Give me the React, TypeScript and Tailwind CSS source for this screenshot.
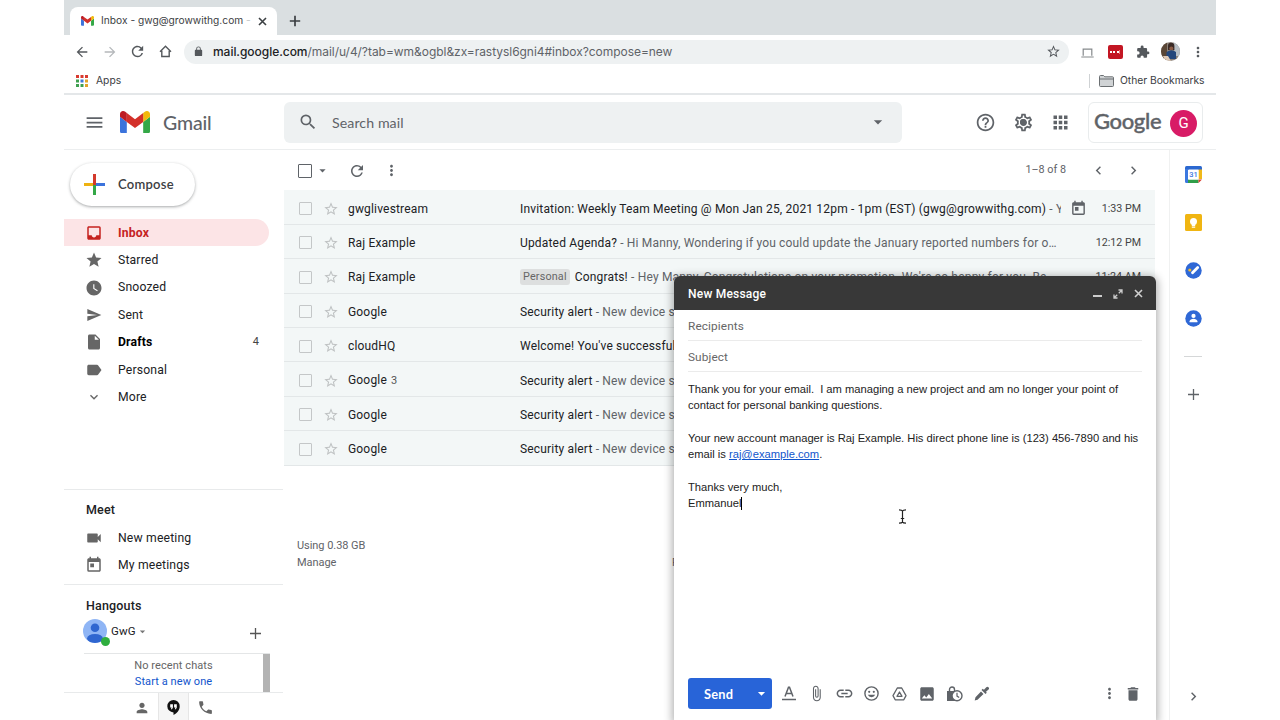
import type { ReactNode } from "react";
import {
  MdApps,
  MdArrowBack,
  MdArrowDropDown,
  MdArrowForward,
  MdAttachFile,
  MdChevronLeft,
  MdChevronRight,
  MdDelete,
  MdExpandMore,
  MdHelpOutline,
  MdImage,
  MdInbox,
  MdLink,
  MdMenu,
  MdMoreVert,
  MdOutlineSettings,
  MdPerson,
  MdPhone,
  MdRefresh,
  MdSearch,
  MdSend,
  MdStar,
  MdStarBorder,
  MdToday,
  MdWatchLater,
} from "react-icons/md";

const solid = {
  label:
    "M17.63 5.84C17.27 5.33 16.67 5 16 5L5 5.01C3.9 5.01 3 5.9 3 7v10c0 1.1.9 1.99 2 1.99L16 19c.67 0 1.27-.33 1.63-.84L22 12z",
  video:
    "M17 10.500V7c0-.55-.45-1-1-1H4c-.55 0-1 .45-1 1v10c0 .55.45 1 1 1h12c.55 0 1-.45 1-1v-3.500l4 4v-11z",
  file: "M6 2c-1.100 0-1.990.9-1.990 2L4 20c0 1.100.89 2 1.990 2H18c1.100 0 2-.9 2-2V8l-6-6zm7 7V3.500L18.500 9z",
  puzzle:
    "M20.500 11H19V7c0-1.100-.9-2-2-2h-4V3.500a2.500 2.500 0 0 0-5 0V5H4c-1.100 0-1.990.9-1.990 2v3.800H3.500a2.700 2.700 0 0 1 0 5.400H2V20c0 1.100.9 2 2 2h3.800v-1.500a2.700 2.700 0 0 1 5.400 0V22H17c1.100 0 2-.9 2-2v-4h1.500a2.500 2.500 0 0 0 0-5z",
  lock: "M18 8h-1V6A5 5 0 0 0 7 6v2H6c-1.100 0-2 .9-2 2v10c0 1.100.9 2 2 2h12c1.100 0 2-.9 2-2V10c0-1.100-.9-2-2-2zM8.900 8V6a3.100 3.100 0 0 1 6.200 0v2z",
};

function Solid({ d, size }: { d: string; size: number }) {
  return (
    <svg width={size} height={size} viewBox="0 0 24 24" fill="currentColor" fillRule="evenodd">
      <path d={d} />
    </svg>
  );
}

function CloseIcon({ className }: { className: string }) {
  return (
    <svg className={className} width="9" height="9" viewBox="0 0 9 9" stroke="currentColor" strokeWidth="1.600">
      <path d="m1 1 7 7M8 1 1 8" />
    </svg>
  );
}

const navItems = [
  { label: "Inbox", icon: <MdInbox size={18} />, active: true },
  { label: "Starred", icon: <MdStar size={18} /> },
  { label: "Snoozed", icon: <MdWatchLater size={18} /> },
  { label: "Sent", icon: <MdSend size={16} /> },
  { label: "Drafts", icon: <Solid d={solid.file} size={18} />, bold: true, count: 4 },
  { label: "Personal", icon: <Solid d={solid.label} size={18} /> },
  { label: "More", icon: <MdExpandMore size={16} /> },
];

const mails = [
  {
    from: "gwglivestream",
    subject: "Invitation: Weekly Team Meeting @ Mon Jan 25, 2021 12pm - 1pm (EST) (gwg@growwithg.com)",
    snippet: "You",
    time: "1:33 PM",
    event: true,
  },
  {
    from: "Raj Example",
    subject: "Updated Agenda?",
    snippet: "Hi Manny, Wondering if you could update the January reported numbers for o…",
    time: "12:12 PM",
  },
  {
    from: "Raj Example",
    tag: "Personal",
    subject: "Congrats!",
    snippet: "Hey Manny, Congratulations on your promotion. We're so happy for you. Be…",
    time: "11:24 AM",
  },
  { from: "Google", subject: "Security alert", snippet: "New device s" },
  { from: "cloudHQ", subject: "Welcome! You've successful" },
  { from: "Google", thread: 3, subject: "Security alert", snippet: "New device s" },
  { from: "Google", subject: "Security alert", snippet: "New device s" },
  { from: "Google", subject: "Security alert", snippet: "New device s" },
];

function Slot({ className, children }: { className: string; children: ReactNode }) {
  return <span className={`flex shrink-0 items-center justify-center ${className}`}>{children}</span>;
}

function GmailLogo({ width }: { width: number }) {
  return (
    <svg width={width} height={width * 0.75} viewBox="52 42 88 66">
      <path fill="#3b73dc" d="M58 108h14V74L52 59v43c0 3.32 2.69 6 6 6" />
      <path fill="#34a847" d="M120 108h14c3.32 0 6-2.69 6-6V59l-20 15" />
      <path fill="#f2b90c" d="M120 48v26l20-15v-8c0-7.42-8.47-11.65-14.4-7.2" />
      <path fill="#d3302a" d="M72 74V48l24 18 24-18v26L96 92" />
      <path fill="#bd1c24" d="M52 51v8l20 15V48l-5.6-4.2c-5.94-4.45-14.4-.22-14.4 7.2" />
    </svg>
  );
}

function BrowserChrome() {
  return (
    <div className="shrink-0 font-[Inter,sans-serif] text-[#3c4043]">
      <div className="flex h-[35px] items-end bg-[#dadfe1] pl-1.5">
        <div className="flex h-7 w-[207px] items-center rounded-t-lg bg-white pl-[11px]">
          <GmailLogo width={13} />
          <span className="ml-[7px] w-[150px] text-[10.2px] tracking-[0.02px] whitespace-nowrap">
            Inbox - gwg@growwithg.com <span className="text-[#c3c6c8]">-</span>
          </span>
          <CloseIcon className="ml-[7px]" />
        </div>
        <svg className="mb-[8px] ml-3" width="12" height="12" viewBox="0 0 12 12" stroke="#3c4043" strokeWidth="1.7">
          <path d="M6 .8v10.4M.8 6h10.4" />
        </svg>
      </div>
      <div className="flex h-[33px] items-center text-[#54585c]">
        <Slot className="ml-1 w-7">
          <MdArrowBack size={16} />
        </Slot>
        <Slot className="w-7 text-[#b5b8bb]">
          <MdArrowForward size={16} />
        </Slot>
        <Slot className="w-[27px]">
          <MdRefresh size={17} />
        </Slot>
        <Slot className="w-7">
          <svg width="13" height="13" viewBox="0 0 13 13" fill="none" stroke="currentColor" strokeWidth="1.4">
            <path d="M1 6.8 6.5 1.3 12 6.8M2.8 5.8v5.7h7.4V5.8" />
          </svg>
        </Slot>
        <div className="ml-[5px] flex h-6 w-[885px] items-center rounded-full bg-[#eef1f2] pr-[8px] pl-[9px]">
          <Solid d={solid.lock} size={11} />
          <span className="ml-[9px] flex-1 text-[12px] tracking-[-0.04px] whitespace-nowrap text-[#5f6368]">
            <span className="font-medium text-[#202124]">mail.google.com</span>
            /mail/u/4/?tab=wm&amp;ogbl&amp;zx=rastysl6gni4#inbox?compose=new
          </span>
          <MdStarBorder size={15} />
        </div>
        <Slot className="ml-1 w-[28px] pt-0.5">
          <svg width="13" height="10" viewBox="0 0 13 10" fill="none" stroke="#85898c" strokeWidth="1.2">
            <path d="M2.2 7.8V1.2h8.6v6.6M.3 9h12.4" />
          </svg>
        </Slot>
        <Slot className="w-[28px]">
          <span className="flex h-3.5 w-[15px] items-center justify-center gap-[1.5px] rounded-[2px] bg-[#c31623]">
            <i className="size-0.5 bg-white" />
            <i className="size-0.5 bg-white" />
            <i className="size-0.5 bg-white" />
            <i className="-ml-px h-1 w-px bg-[#e77]" />
          </span>
        </Slot>
        <Slot className="w-[27px]">
          <Solid d={solid.puzzle} size={14} />
        </Slot>
        <Slot className="w-[28px]">
          <svg width="19" height="19" viewBox="0 0 19 19">
            <clipPath id="photo">
              <circle cx="9.5" cy="9.5" r="9.5" />
            </clipPath>
            <g clipPath="url(#photo)">
              <path fill="#8c827a" d="M0 0h19v19H0z" />
              <path fill="#b9c0c6" d="M12 0h7v14h-5z" />
              <path fill="#5a4636" d="M0 0h6v19H0z" />
              <path fill="#3a2a26" d="M7 4a3.200 3.200 0 0 1 6.400 0v4H7z" />
              <circle cx="10.300" cy="6.500" r="2" fill="#8b5b45" />
              <path fill="#24477c" d="M5.500 10q5-3.500 9.500 0v7H5.500z" />
              <path fill="#dfc9b6" d="M2 14h5l3 5H4z" />
            </g>
          </svg>
        </Slot>
        <Slot className="w-[28px]">
          <MdMoreVert size={16} />
        </Slot>
      </div>
      <div className="flex h-[27px] items-center border-b-2 border-[#e4e7e9] pr-3 pl-[12px] text-[10.3px]">
        <svg width="12" height="12" viewBox="0 0 12 12">
          <path fill="#d93a2f" d="M0 0h3v3H0zM4.500 0h3v3h-3zM9 0h3v3H9z" />
          <path fill="#3fa050" d="M0 4.500h3v3H0zM0 9h3v3H0z" />
          <path fill="#3f78d8" d="M4.500 4.500h3v3h-3z" />
          <path fill="#e2a32a" d="M9 4.500h3v3H9zM9 9h3v3H9z" />
          <path fill="#3fa050" d="M4.500 9h3v3h-3z" />
        </svg>
        <span className="ml-[8px] flex-1">Apps</span>
        <span className="h-3.5 w-px bg-[#cfd2d4]" />
        <svg className="mr-[6px] ml-[9px]" width="15" height="12" viewBox="0 0 15 12">
          <path fill="#d0d3d5" stroke="#6b6f72" d="M.5 10.500v-9q0-1 1-1h3l1.300 1.300h7.700q1 0 1 1v7.700q0 1-1 1h-12q-1 0-1-1zM.5 4h14" />
        </svg>
        <span className="w-[84px] tracking-[-0.02px] whitespace-nowrap">Other Bookmarks</span>
      </div>
    </div>
  );
}

function Header() {
  return (
    <header className="flex h-[55px] shrink-0 items-center border-b border-[#eceeef] text-[#5f6368]">
      <Slot className="ml-[18px] w-6">
        <MdMenu size={21} />
      </Slot>
      <span className="ml-[14px]">
        <GmailLogo width={30} />
      </span>
      <span className="mt-px ml-[13px] w-[121px] font-[Lato,sans-serif] text-[19.5px] font-medium tracking-[-0.15px]">
        Gmail
      </span>
      <div className="flex h-[41px] w-[618px] items-center rounded-md bg-[#eef1f2] px-[14px]">
        <MdSearch size={20} />
        <span className="mt-px ml-[14px] flex-1 font-[Lato,sans-serif] text-[14.2px] tracking-[0.07px]">
          Search mail
        </span>
        <MdArrowDropDown size={20} />
      </div>
      <Slot className="ml-[64px] w-[38px]">
        <MdHelpOutline size={21} />
      </Slot>
      <Slot className="relative w-[38px]">
        <MdOutlineSettings size={21} />
        <i className="absolute size-1.5 rounded-full bg-[#5f6368]" />
      </Slot>
      <Slot className="w-[37px]">
        <MdApps size={21} />
      </Slot>
      <div className="ml-[9px] flex h-[41px] w-[115px] items-center rounded-md border-[1.5px] border-[#e9eced] pl-[5px]">
        <span className="w-[76px] pb-[3px] font-[Lato,sans-serif] text-[22px] font-medium tracking-[-0.35px] [-webkit-text-stroke:0.4px_#5f6368]">
          Google
        </span>
        <span className="mt-0.5 flex size-[27px] items-center justify-center rounded-full bg-[#d81b66] text-[15px] text-white">
          G
        </span>
      </div>
    </header>
  );
}

function SideItem({ icon, children }: { icon: ReactNode; children: ReactNode }) {
  return (
    <>
      <Slot className="ml-[21px] w-[18px]">{icon}</Slot>
      <span className="ml-[15px] flex-1">{children}</span>
    </>
  );
}

function Sidebar() {
  return (
    <aside className="flex w-[219px] shrink-0 flex-col text-[12.2px] tracking-[0.17px] text-[#202124]">
      <button className="mt-[13px] ml-1.5 flex h-[43px] w-[125px] shrink-0 items-center rounded-full pl-[14px] font-[Lato,sans-serif] text-[13px] font-semibold tracking-[0.25px] text-[#3c4043] shadow-[0_1px_3px_rgba(60,64,67,0.45)]">
        <svg width="21" height="21" viewBox="0 0 21 21">
          <path fill="#eeb211" d="M0 9h9v3H0z" />
          <path fill="#3b73dc" d="M12 9h9v3h-9z" />
          <path fill="#34a847" d="M9 11h3v10H9z" />
          <path fill="#d33a2c" d="M9 0h3v11H9z" />
        </svg>
        <span className="ml-[13px]">Compose</span>
      </button>
      <nav className="mt-[13px] flex flex-col">
        {navItems.map((item) => (
          <div
            key={item.label}
            className={`flex h-[27.45px] w-[205px] items-center rounded-r-full ${item.active ? "bg-[#fce4e6] text-[#c5221f]" : "text-[#666]"}`}
          >
            <SideItem icon={item.icon}>
              <span
                className={
                  item.active ? "font-bold text-[#c5221f]" : item.bold ? "font-bold text-black" : "text-[#202124]"
                }
              >
                {item.label}
              </span>
            </SideItem>
            {item.count && <span className="mr-2.5 text-[11px] text-[#444]">{item.count}</span>}
          </div>
        ))}
      </nav>
      <div className="mt-[78px] border-t border-[#e8eaeb] pt-[10px]">
        <h3 className="pl-[22px] text-[12.500px] leading-5 font-medium">Meet</h3>
        <div className="mt-[4px] flex h-[27.500px] items-center text-[#666]">
          <SideItem icon={<Solid d={solid.video} size={18} />}>
            <span className="text-[#202124]">New meeting</span>
          </SideItem>
        </div>
        <div className="flex h-[27.500px] items-center text-[#666]">
          <SideItem icon={<MdToday size={18} />}>
            <span className="text-[#202124]">My meetings</span>
          </SideItem>
        </div>
      </div>
      <div className="mt-[5px] flex flex-1 flex-col border-t border-[#e8eaeb] pt-[11px]">
        <h3 className="pl-[22px] text-[12.500px] leading-5 font-medium">Hangouts</h3>
        <div className="flex h-[37px] items-start pl-[19px]">
          <span className="relative mt-[3px]">
            <svg width="24" height="24" viewBox="0 0 24 24">
              <clipPath id="face">
                <circle cx="12" cy="12" r="12" />
              </clipPath>
              <circle cx="12" cy="12" r="12" fill="#8fb5f5" />
              <circle cx="12" cy="8.800" r="4.300" fill="#2f66d0" />
              <ellipse cx="12" cy="19.500" rx="8" ry="4.500" fill="#2f66d0" clipPath="url(#face)" />
            </svg>
            <i className="absolute -right-[2.500px] -bottom-[3px] size-[9px] rounded-full bg-[#2fae3f]" />
          </span>
          <span className="mt-[7px] ml-[4px] text-[11.500px] leading-4">GwG</span>
          <MdArrowDropDown size={13} className="mt-[9px] text-[#777]" />
          <svg className="mt-[12px] ml-[101px]" width="11" height="11" viewBox="0 0 11 11" stroke="#555" strokeWidth="1.300">
            <path d="M5.500 0v11M0 5.500h11" />
          </svg>
        </div>
        <div className="ml-5 flex h-[39px] w-[186px] justify-between border-t border-[#e4e6e7]">
          <div className="flex-1 pt-[4px] text-center text-[11px] leading-4 tracking-[0.08px] text-[#666]">
            <p>No recent chats</p>
            <p className="text-[#1155cc]">Start a new one</p>
          </div>
          <span className="w-[7px] bg-[#b3b3b3]" />
        </div>
        <div className="flex flex-1 border-t border-[#e8eaeb] pl-[62px] text-[#666]">
          <Slot className="w-8 pt-0.5">
            <MdPerson size={16} />
          </Slot>
          <Slot className="w-[31px] border-x border-[#e6e6e6] bg-[#f6f6f6] pt-0.5">
            <svg width="13" height="15" viewBox="0 0 13 15">
              <path fill="#111" d="M6.500 0a6.200 6.200 0 0 0 0 12.400V15c3.500-1.700 6.200-4.800 6.200-8.800A6.200 6.200 0 0 0 6.500 0z" />
              <path fill="#fff" d="M3.200 4.200h2.700v3.300L5 9.300H3.900l.7-1.900H3.200zM7.100 4.200h2.700v3.300l-.9 1.800H7.800l.7-1.900H7.100z" />
            </svg>
          </Slot>
          <Slot className="w-[33px] pt-0.5">
            <MdPhone size={17} />
          </Slot>
        </div>
      </div>
    </aside>
  );
}

function MailList() {
  return (
    <div className="h-[276px] overflow-hidden pt-[0.4px] text-[12px] tracking-[0.175px] text-[#202124]">
      {mails.map((mail, i) => (
        <div
          key={i}
          className="flex h-[34.400px] items-center border-b border-[#e3e7e8] bg-[#f3f7f7] pt-[3px] pr-3.5 pl-[15px] whitespace-nowrap"
        >
          <span className="size-[13px] rounded-[1px] border-[1.500px] border-[#c4c7c8]" />
          <MdStarBorder size={16} className="ml-[11px] text-[#bfc2c3]" />
          <span className="ml-[9px] w-[172px]">
            {mail.from}
            {mail.thread && <span className="ml-1 text-[11px] text-[#555]">{mail.thread}</span>}
          </span>
          {mail.tag && (
            <span className="mr-[5px] rounded-[3px] bg-[#dddfdf] px-[3px] text-[10.800px] leading-4 text-[#666]">
              {mail.tag}
            </span>
          )}
          <span className={mail.event ? "w-[541px] overflow-hidden" : ""}>
            {mail.subject}
            {mail.snippet && <span className="text-[#5f6368]"> - {mail.snippet}</span>}
          </span>
          {mail.event && <MdToday size={17} className="ml-[9px] text-[#5f6368]" />}
          {mail.time && <span className="ml-auto text-[10.700px] tracking-normal text-[#444]">{mail.time}</span>}
        </div>
      ))}
    </div>
  );
}

function SidePanel() {
  return (
    <aside className="flex w-[47px] shrink-0 flex-col items-center border-l border-[#f0f1f1] pt-4 text-[#5f6368]">
      <svg width="17" height="17" viewBox="0 0 17 17">
        <path fill="#2b68d0" d="M1.500 0h14Q17 0 17 1.500V4H0V1.500Q0 0 1.500 0z" />
        <path fill="#3b78e0" d="M0 3h3v14H1.500Q0 17 0 15.500z" />
        <path fill="#f0b91a" d="M13.500 3.500H17V13h-3.500z" />
        <path fill="#2f9e49" d="M3 13.500h10.500V17H3z" />
        <path fill="#d93a2c" d="M13.500 13.500H17L13.500 17z" />
        <path fill="#fff" d="M3.500 3.500h10v10h-10z" />
        <text x="8.500" y="11.200" textAnchor="middle" fontSize="7.500" fontWeight="500" fill="#3b78e0" fontFamily="Roboto">
          31
        </text>
      </svg>
      <svg className="mt-[31px]" width="17" height="17" viewBox="0 0 17 17">
        <rect width="17" height="17" rx="1.500" fill="#f0b512" />
        <circle cx="8.500" cy="7.500" r="3.500" fill="#fff" />
        <path fill="#fff" d="M6.800 9h3.400v3.200H6.800zM6.800 12.800h3.400v1H6.800z" />
      </svg>
      <svg className="mt-[31px]" width="17" height="17" viewBox="0 0 17 17">
        <circle cx="8.500" cy="8.500" r="8.200" fill="#2f68d6" />
        <path stroke="#fff" strokeWidth="2.800" strokeLinecap="round" d="m7.500 10.800 5.200-5.300" />
        <circle cx="4.800" cy="8" r="1.600" fill="#efb72a" />
      </svg>
      <svg className="mt-[31px]" width="17" height="17" viewBox="0 0 17 17">
        <circle cx="8.500" cy="8.500" r="8.200" fill="#2f68d6" />
        <circle cx="8.500" cy="5.900" r="2.100" fill="#fff" />
        <path fill="#fff" d="M4.600 12.200v-.9c0-1.800 2.200-2.600 3.900-2.600s3.900.8 3.900 2.600v.9z" />
      </svg>
      <span className="mt-[29px] h-px w-[18px] bg-[#d5d7d8]" />
      <svg className="mt-8" width="11" height="11" viewBox="0 0 11 11" stroke="currentColor" strokeWidth="1.300">
        <path d="M5.500 0v11M0 5.500h11" />
      </svg>
      <MdChevronRight size={17} className="mt-auto mb-[15px]" />
    </aside>
  );
}

function ComposeWindow() {
  return (
    <section className="absolute top-[276px] left-[674px] flex h-[444px] w-[482px] flex-col overflow-hidden rounded-t-md bg-white">
      <div className="flex h-[34px] shrink-0 items-center bg-[#383838] pt-px pr-[13px] pl-3.5 text-[12px] font-medium tracking-[0.22px] text-white">
        <span className="flex-1">New Message</span>
        <span className="mt-[5px] h-0.5 w-[9px] bg-[#ccc]" />
        <svg className="ml-[11px]" width="10" height="10" viewBox="0 0 10 10" fill="none" stroke="#ccc" strokeWidth="1.300">
          <path d="M5.500 1h3.500v3.500M4.500 9H1V5.500M9 1 5.800 4.200M1 9l3.200-3.200" />
        </svg>
        <CloseIcon className="ml-[11px] text-[#d0d0d0]" />
      </div>
      <div className="flex flex-1 flex-col px-3.5 text-[11.800px] tracking-[0.12px] text-[#666]">
        <div className="flex h-[31px] items-center border-b border-[#ebebeb] pt-[3px]">Recipients</div>
        <div className="flex h-[31px] items-center border-b border-[#ebebeb] pt-[3px]">Subject</div>
        <div className="mt-[9px] font-['Liberation_Sans',Arial,sans-serif] text-[11.200px] leading-[16.300px] tracking-[-0.01px] whitespace-pre text-[#222]">
          <p>Thank you for your email.  I am managing a new project and am no longer your point of</p>
          <p>contact for personal banking questions.</p>
          <br />
          <p>Your new account manager is Raj Example. His direct phone line is (123) 456-7890 and his</p>
          <p>
            email is <a className="text-[#1155cc] underline">raj@example.com</a>.
          </p>
          <br />
          <p>Thanks very much,</p>
          <p className="flex items-center">
            Emmanuel
            <span className="h-[13px] w-px bg-black" />
          </p>
        </div>
      </div>
      <div className="mb-[11px] flex h-[31px] items-center px-3.5 text-[#5f6368]">
        <div className="mr-[4px] flex h-full w-[83.500px] items-center rounded-[3px] bg-[#2864d8] pl-4 text-white">
          <span className="mt-0.5 flex-1 font-[Lato,sans-serif] text-[12.800px] font-bold tracking-[0.25px]">Send</span>
          <MdArrowDropDown size={17} className="mr-0.5" />
        </div>
        <Slot className="w-[27.500px]">
          <svg width="14" height="15" viewBox="0 0 14 15" fill="none" stroke="currentColor" strokeWidth="1.500">
            <path d="M3 10.500 6.500 1.200h1L11 10.500M4.200 7.500h5.600M0 13.500h14" />
          </svg>
        </Slot>
        <Slot className="w-[27.500px]">
          <MdAttachFile size={17} />
        </Slot>
        <Slot className="w-[27.500px]">
          <MdLink size={19} />
        </Slot>
        <Slot className="w-[27.500px]">
          <svg width="15" height="15" viewBox="0 0 15 15">
            <circle cx="7.500" cy="7.500" r="6.600" fill="none" stroke="currentColor" strokeWidth="1.400" />
            <circle cx="5.200" cy="5.800" r="1.100" fill="currentColor" />
            <circle cx="9.800" cy="5.800" r="1.100" fill="currentColor" />
            <path fill="currentColor" d="M3.800 8.800h7.400a4 4 0 0 1-7.400 0z" />
          </svg>
        </Slot>
        <Slot className="w-[27.500px]">
          <svg width="15" height="14" viewBox="0 0 15 14" fill="none" stroke="currentColor" strokeWidth="1.300" strokeLinejoin="round">
            <path d="M5.300 1h4.400l4.300 7.600-2.200 4.200H3.200L1 8.600z" />
            <path d="M7.500 5 10 9.300H5z" />
          </svg>
        </Slot>
        <Slot className="w-[27.500px]">
          <MdImage size={18} />
        </Slot>
        <Slot className="w-[27.500px]">
          <svg width="17" height="16" viewBox="0 0 17 16">
            <path fill="none" stroke="currentColor" strokeWidth="1.400" d="M3.500 6V3.500a2.500 2.500 0 0 1 5 0V6" />
            <path fill="currentColor" d="M1 5h10v10H1z" />
            <circle cx="11" cy="9.800" r="5" fill="#fff" stroke="currentColor" strokeWidth="1.400" />
            <path fill="none" stroke="currentColor" strokeWidth="1.200" d="M11 6.800v3.300l2.200 1.500" />
          </svg>
        </Slot>
        <Slot className="w-[27.500px]">
          <svg width="15" height="15" viewBox="0 0 15 15" fill="currentColor">
            <path d="m7 5.500 2.500 2.500-6 5.700-2.800.8.800-3.200zM8.800 2.800l4 4-1.300 1.300-4-4z" />
            <path d="m9.500 4.200 2.800-3a1.500 1.500 0 0 1 2.200 2.200l-3 2.800z" />
          </svg>
        </Slot>
        <MdMoreVert size={17} className="ml-auto" />
        <MdDelete size={18} className="ml-[6px]" />
      </div>
    </section>
  );
}

export default function App() {
  return (
    <div className="relative flex h-[720px] w-[1280px] flex-col overflow-hidden bg-white px-16 font-[Roboto,sans-serif]">
      <BrowserChrome />
      <Header />
      <div className="flex min-h-0 flex-1">
        <Sidebar />
        <main className="flex w-[886px] shrink-0 flex-col pr-3.5 pl-px text-[#5f6368]">
          <div className="flex h-10 shrink-0 items-center pt-px pl-3.5">
            <span className="size-[14px] rounded-[1px] border-[1.500px] border-[#5f6368]" />
            <MdArrowDropDown size={15} className="ml-[3px]" />
            <MdRefresh size={18} className="ml-[18px]" />
            <MdMoreVert size={17} className="ml-[17px]" />
            <span className="ml-auto text-[10.800px]">1–8 of 8</span>
            <MdChevronLeft size={17} className="ml-6" />
            <MdChevronRight size={17} className="mr-[13px] ml-[18px]" />
          </div>
          <MailList />
          <div className="mt-[71px] flex pl-[13px] text-[11px] leading-[17px] tracking-[-0.05px]">
            <div className="w-[375px]">
              <p>Using 0.38 GB</p>
              <p>Manage</p>
            </div>
            <p className="mt-[17px]">Program Policies</p>
          </div>
        </main>
        <SidePanel />
      </div>
      {/* shadow sits on its own layer so the window can clip its corners */}
      <div className="absolute top-[276px] left-[674px] h-[444px] w-[482px] rounded-t-md shadow-[0_2px_8px_2px_rgba(0,0,0,0.3)]" />
      <ComposeWindow />
      <svg className="absolute top-[509px] left-[898px]" width="9" height="15" viewBox="0 0 9 15" fill="none" stroke="#222" strokeWidth="1.200">
        <path d="M1 .8q3 0 3.500 1.200Q5 .8 8 .8M1 14.200q3 0 3.500-1.200.5 1.200 3.500 1.200M4.500 2v11M2.800 9.500h3.400" />
      </svg>
    </div>
  );
}
